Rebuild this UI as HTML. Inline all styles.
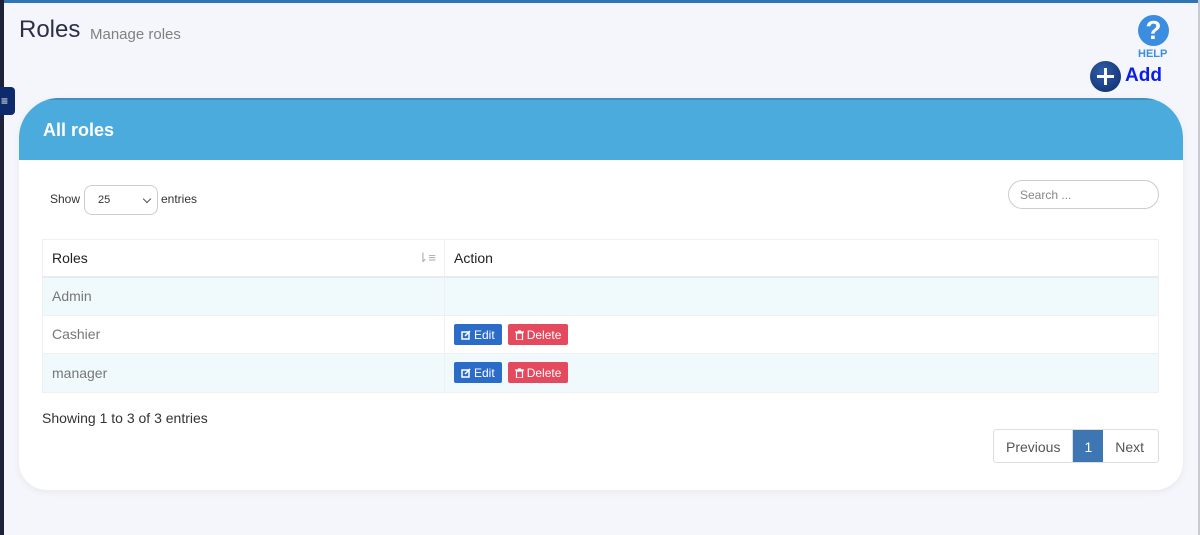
<!DOCTYPE html>
<html><head><style>
*{box-sizing:border-box;margin:0;padding:0}
body{width:1200px;height:535px;background:#f5f6fb;font-family:"Liberation Sans",Arial,sans-serif;position:relative;overflow:hidden}
.top{position:absolute;left:0;top:0;width:1200px;height:3px;background:#2f74b5}
.left{position:absolute;left:0;top:0;width:4px;height:535px;background:#1e2238}
.right{position:absolute;right:0;top:0;width:2px;height:535px;background:#c7cad3}
.tog{position:absolute;left:0;top:87px;width:15px;height:28px;background:#0d2a6b;border-radius:0 4px 4px 0;color:#fff;font-size:12px;line-height:28px;padding-left:1px}
h1{position:absolute;left:19px;top:16px;font-size:24px;font-weight:normal;color:#2c2f4a}
.sub{position:absolute;left:90px;top:26px;font-size:15px;color:#808080}
.help{position:absolute;left:1138px;top:15px;width:31px;height:31px;border-radius:50%;background:#3b8de0;color:#fff;font-weight:bold;font-size:26px;text-align:center;line-height:31px}
.helpt{position:absolute;left:1138px;top:48px;font-size:11px;font-weight:bold;color:#3b8de0}
.addc{position:absolute;left:1090px;top:61px;width:31px;height:31px;border-radius:50%;background:radial-gradient(circle at 40% 35%,#2f5ea8,#0d2a6b)}
.addc:before{content:"";position:absolute;left:7px;top:14px;width:17px;height:3px;background:#fff}
.addc:after{content:"";position:absolute;left:14px;top:7px;width:3px;height:17px;background:#fff}
.addt{position:absolute;left:1125px;top:65px;font-size:19px;font-weight:bold;color:#0a1ee8}
.card{position:absolute;left:19px;top:98px;width:1164px;height:392px;background:#fff;border-radius:40px 40px 28px 28px;box-shadow:0 2px 8px rgba(0,0,0,.06);overflow:hidden}
.hd{height:62px;background:#4aabdc;border-top:2px solid #3f8fc0;color:#fff;font-weight:bold;font-size:18px;padding:20px 0 0 24px}
.show{position:absolute;left:31px;top:94px;font-size:12px;color:#333}
.sel{position:absolute;left:65px;top:87px;width:74px;height:30px;border:1px solid #ccc;border-radius:8px;font-size:11px;padding:8px 0 0 13px;color:#333}
.sel:after{content:"";position:absolute;right:7px;top:10px;width:5px;height:5px;border-right:1px solid #555;border-bottom:1px solid #555;transform:rotate(45deg)}
.ent{position:absolute;left:142px;top:94px;font-size:12px;color:#333}
.search{position:absolute;left:989px;top:82px;width:151px;height:29px;border:1px solid #ccc;border-radius:15px;font-size:12px;color:#888;padding:7px 0 0 11px}
table{position:absolute;left:23px;top:141px;width:1117px;border-collapse:collapse;font-size:14px}
td,th{border:1px solid #eef0f2;height:38.5px;padding-left:9px;text-align:left}
th{font-weight:normal;color:#222;border-bottom:2px solid #e8ebee;height:37px}
td{color:#777}
tr.s td{background:#f0fafd}
.b{display:inline-block;height:21px;font-size:12px;color:#fff;border-radius:2px;padding:4px 7px 0;vertical-align:middle}
.b svg{vertical-align:-1px;margin-right:3px}
.e{background:#2c6cc9}.d{background:#e4495d;margin-left:6px}
.info{position:absolute;left:23px;top:312px;font-size:14px;color:#333}
.pg{position:absolute;left:974px;top:331px;width:166px;height:34px;display:flex;border:1px solid #ddd;border-radius:3px;font-size:14px;color:#555}
.pg div{padding:9px 12px 0;border-right:1px solid #ddd}
.pg .a{background:#3d76b3;color:#fff;border:none;padding:9px 11px 0}
</style></head><body>
<div class="top"></div><div class="left"></div><div class="right"></div>
<div class="tog">≡</div>
<h1>Roles</h1><div class="sub">Manage roles</div>
<div class="help">?</div><div class="helpt">HELP</div>
<div class="addc"></div><div class="addt">Add</div>
<div class="card">
<div class="hd">All roles</div>
<div class="show">Show</div><div class="sel">25</div><div class="ent">entries</div>
<div class="search">Search ...</div>
<table>
<tr><th style="width:402px">Roles<span style="float:right;margin-right:8px;color:#aaa;font-size:13px">⇂≡</span></th><th>Action</th></tr>
<tr class="s"><td>Admin</td><td></td></tr>
<tr><td>Cashier</td><td><span class="b e"><svg width="10" height="10" viewBox="0 0 10 10"><rect x="1" y="2" width="7" height="7" fill="none" stroke="#fff" stroke-width="1.5"/><path d="M4 6 L9 1" stroke="#fff" stroke-width="1.5"/></svg>Edit</span><span class="b d"><svg width="9" height="10" viewBox="0 0 9 10"><path d="M0 2h9M3 1h3M1.5 3h6v7h-6z" stroke="#fff" fill="none" stroke-width="1.2"/></svg>Delete</span></td></tr>
<tr class="s"><td>manager</td><td><span class="b e"><svg width="10" height="10" viewBox="0 0 10 10"><rect x="1" y="2" width="7" height="7" fill="none" stroke="#fff" stroke-width="1.5"/><path d="M4 6 L9 1" stroke="#fff" stroke-width="1.5"/></svg>Edit</span><span class="b d"><svg width="9" height="10" viewBox="0 0 9 10"><path d="M0 2h9M3 1h3M1.5 3h6v7h-6z" stroke="#fff" fill="none" stroke-width="1.2"/></svg>Delete</span></td></tr>
</table>
<div class="info">Showing 1 to 3 of 3 entries</div>
<div class="pg"><div>Previous</div><div class="a">1</div><div style="border:none">Next</div></div>
</div>
</body></html>
